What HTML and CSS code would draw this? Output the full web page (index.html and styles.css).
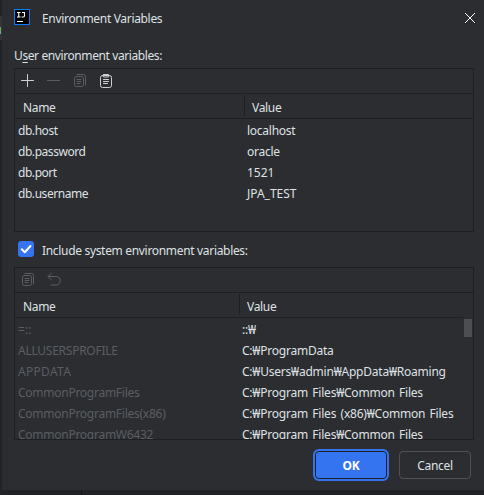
FILE: index.html
```html
<!DOCTYPE html>
<html lang="en">
<head>
<meta charset="utf-8">
<title>Environment Variables</title>
<link rel="stylesheet" href="styles.css">
</head>
<body>
<span class="editor-mark"></span>
<main class="dialog">
  <header class="titlebar">
    <svg class="logo" width="16" height="16" viewBox="0 0 16 16"><rect width="16" height="16" fill="#087cfa"/><rect x="1" y="1" width="14" height="14" fill="#000"/><path d="M3 3.500h3.500M4.750 3.500v4.500M3 8h3.500M8 3.500h3M10.500 3.500v3.300q0 1.200-1.200 1.200H7.500M3 12.500h6" fill="none" stroke="#fff" stroke-width="1.100"/></svg>
    <h1>Environment Variables</h1>
    <svg class="close" width="10" height="10" viewBox="0 0 10 10"><path d="M0 0l10 10M10 0L0 10" stroke="#fff" stroke-width="1"/></svg>
  </header>
  <p class="label"><span>U<u>s</u>er environment variables:</span></p>
  <section class="panel user">
    <div class="toolbar">
      <svg width="16" height="16" viewBox="0 0 16 16"><path d="M7.500 1.500v12M1.500 7.500h12" class="on"/></svg>
      <svg width="16" height="16" viewBox="0 0 16 16"><path d="M1.500 7.500h12" class="off"/></svg>
      <svg width="16" height="16" viewBox="0 0 16 16"><path d="M5 1.500h6.500a2 2 0 0 1 2 2V12M5 6.500h4M5 8.500h4M5 10.500h3" class="off"/><rect x="2.500" y="3.500" width="9" height="10" rx="2" class="off"/></svg>
      <svg width="16" height="16" viewBox="0 0 16 16"><rect x="2.500" y="2.500" width="11" height="12" rx="2" class="on"/><rect x="5" y="1.500" width="6" height="2.500" rx="1" class="on"/><path d="M5.500 6.500h5M5.500 8.500h5M5.500 10.500h4" class="on"/></svg>
    </div>
    <div class="head"><span>Name</span><span>Value</span></div>
    <div class="rows">
      <div class="row"><span>db.host</span><span>localhost</span></div>
      <div class="row"><span>db.password</span><span>oracle</span></div>
      <div class="row"><span>db.port</span><span class="plain">1521</span></div>
      <div class="row"><span>db.username</span><span class="plain">JPA_TEST</span></div>
    </div>
  </section>
  <div class="check">
    <svg width="16" height="16" viewBox="0 0 16 16"><rect width="16" height="16" rx="3" fill="#3574f0"/><path d="M3.800 8.200l3 3L12.500 5" fill="none" stroke="#fff" stroke-width="2" stroke-linecap="round" stroke-linejoin="round"/></svg>
    <span>Include system environment variables:</span>
  </div>
  <section class="panel system">
    <div class="toolbar">
      <svg width="16" height="16" viewBox="0 0 16 16"><path d="M5 1.500h6.500a2 2 0 0 1 2 2V12M5 6.500h4M5 8.500h4M5 10.500h3" class="off"/><rect x="2.500" y="3.500" width="9" height="10" rx="2" class="off"/></svg>
      <svg width="16" height="16" viewBox="0 0 16 16"><path d="M5.500 1.500L2 4.500 5.500 8M2 4.500H10a4.250 4.250 0 0 1 0 8.500H5" class="off"/></svg>
    </div>
    <div class="head"><span>Name</span><span>Value</span></div>
    <div class="rows">
      <div class="row"><span class="symbols">=::</span><span>::₩</span></div>
      <div class="row"><span>ALLUSERSPROFILE</span><span>C:₩ProgramData</span></div>
      <div class="row"><span class="wide">APPDATA</span><span>C:₩Users₩admin₩AppData₩Roaming</span></div>
      <div class="row"><span>CommonProgramFiles</span><span>C:₩Program Files₩Common Files</span></div>
      <div class="row"><span>CommonProgramFiles(x86)</span><span>C:₩Program Files (x86)₩Common Files</span></div>
      <div class="row"><span>CommonProgramW6432</span><span>C:₩Program Files₩Common Files</span></div>
      <i class="thumb"></i>
    </div>
  </section>
  <footer class="actions">
    <button class="ok">OK</button>
    <button class="cancel">Cancel</button>
  </footer>
</main>
</body>
</html>
```
FILE: styles.css
```css
* { box-sizing: border-box; }
body { margin: 0; width: 484px; height: 495px; overflow: hidden; background: linear-gradient(#17181a, #17181a) 81px 100% / 1px 5px no-repeat #222327; padding-left: 2px; font: 12px/21px "Noto Sans", "Open Sans", sans-serif; letter-spacing: -0.32px; color: #dfe1e5; }
.editor-mark { position: absolute; left: 0; top: 16px; width: 2px; height: 24px; background: linear-gradient(#6aab73, #6aab73) 0 11px / 1px 7px no-repeat #323438; }
.dialog { width: 482px; height: 490px; background: #2b2d30; padding: 0 10px 0 12px; display: flex; flex-direction: column; }
.titlebar { height: 36px; display: flex; align-items: center; flex: none; }
.logo { margin: -2px 12px 0 0; }
h1 { font-size: 12px; font-weight: 400; margin: 0; flex: 1; }
.close { margin-right: -1px; overflow: visible; }
.label { margin: 9px 0 0; height: 23px; line-height: 21px; letter-spacing: -0.4px; }
.label u { text-underline-offset: 2px; }
.panel { border: 1px solid #1e1f22; width: 460px; flex: none; display: flex; flex-direction: column; }
.user { height: 164px; }
.system { height: 173px; }
.toolbar { height: 25px; flex: none; display: flex; align-items: center; gap: 10px; padding-left: 5px; border-bottom: 1px solid #1e1f22; }
.toolbar svg { fill: none; stroke-width: 1; stroke-linecap: round; }
.on { stroke: #ced0d6; }
.off { stroke: #5a5d63; }
.head, .row { display: grid; grid-template-columns: 229px 1fr; }
.system .head, .system .row { grid-template-columns: 224px 1fr; }
.head { height: 25px; flex: none; padding: 1px 0 2px; border-bottom: 1px solid #1e1f22; }
.system .head { margin-right: 10px; }
.head span { padding-left: 8px; line-height: 25px; height: 21px; }
.head span + span { border-left: 1px solid #1e1f22; padding-left: 7px; }
.rows { position: relative; padding-top: 1px; overflow: hidden; flex: 1; }
.row { height: 21px; white-space: nowrap; }
.row span { padding-left: 3px; }
.user .row { letter-spacing: -0.45px; }
.user .row span:last-child { letter-spacing: -0.25px; }
.user .row .plain:last-child { letter-spacing: 0; }
.system .row span:first-child { color: #5a5d63; letter-spacing: -0.26px; }
.system .row span:last-of-type { letter-spacing: -0.22px; word-spacing: 1.5px; }
.system .row .wide:first-child { letter-spacing: 0.3px; }
.system .row .symbols:first-child { letter-spacing: 0.1px; }
.thumb { position: absolute; right: 1px; top: 1px; width: 8px; height: 18px; background: #4d4e51; }
.check { height: 35px; display: flex; align-items: center; gap: 8px; padding: 0 0 0 4px; }
.check span { margin-top: 2px; }
.check svg { margin-top: -1px; }
.actions { display: flex; justify-content: flex-end; align-items: center; gap: 10px; margin-top: 9px; padding-right: 3px; }
button { font: 12px/22px "Noto Sans", "Open Sans", sans-serif; letter-spacing: -0.3px; color: #dfe1e5; padding: 2px 0 0; width: 72px; height: 28px; background: transparent; border: 1px solid #4e5157; border-radius: 4px; }
.ok { width: 76px; height: 32px; border: 2px solid #3574f0; border-radius: 6px; background: #3574f0; box-shadow: inset 0 0 0 1px #1e1f22; color: #fff; font-weight: 700; }
```
